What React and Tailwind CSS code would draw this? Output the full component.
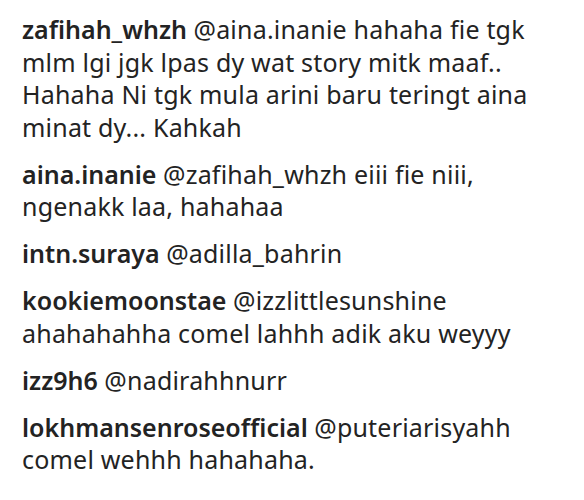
export default function App() {
  const comments = [
    {
      user: "zafihah_whzh",
      lines: [
        "@aina.inanie hahaha fie tgk",
        "mlm lgi jgk lpas dy wat story mitk maaf..",
        "Hahaha Ni tgk mula arini baru teringt aina",
        "minat dy... Kahkah",
      ],
    },
    { user: "aina.inanie", lines: ["@zafihah_whzh eiii fie niii,", "ngenakk laa, hahahaa"] },
    { user: "intn.suraya", lines: ["@adilla_bahrin"] },
    { user: "kookiemoonstae", lines: ["@izzlittlesunshine", "ahahahahha comel lahhh adik aku weyyy"] },
    { user: "izz9h6", lines: ["@nadirahhnurr"] },
    { user: "lokhmansenroseofficial", lines: ["@puteriarisyahh", "comel wehhh hahahaha."] },
  ];
  return (
    <div
      className="w-[584px] h-[500px] bg-white pl-[22px] pt-[13px] text-[25px] leading-[32.5px] text-[#232323] overflow-hidden"
      style={{ fontFamily: '"Noto Sans", "Open Sans", sans-serif' }}
    >
      <div className="flex flex-col gap-[14.5px]">
        {comments.map((c) => (
          <div key={c.user}>
            {c.lines.map((l, i) => (
              <div key={i} className="whitespace-nowrap">
                {i === 0 && <span className="font-semibold">{c.user} </span>}
                <span className="tracking-[0.2px]">{l}</span>
              </div>
            ))}
          </div>
        ))}
      </div>
    </div>
  );
}
